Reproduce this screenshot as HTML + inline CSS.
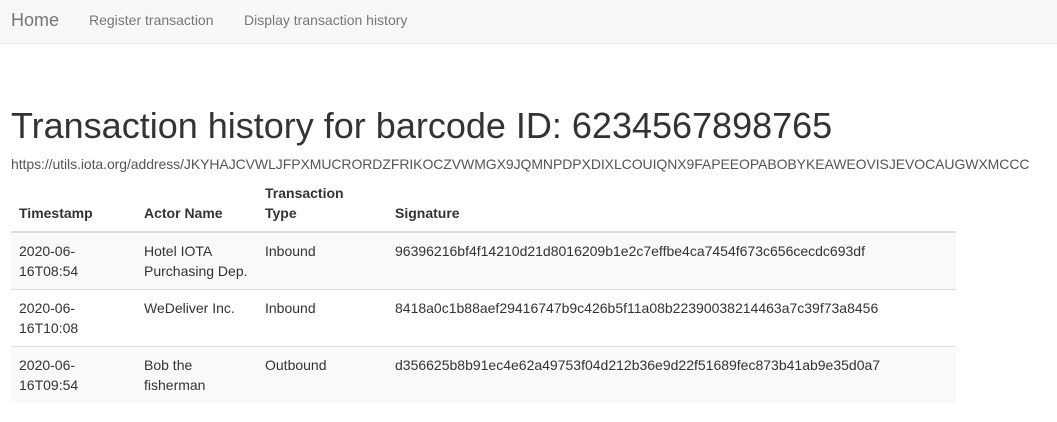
<!DOCTYPE html>
<html><head><style>
body{margin:0;font-family:"Liberation Sans",Arial,sans-serif;color:#333;background:#fff;width:1057px;height:422px;overflow:hidden}
.nav{height:43px;background:#f8f8f8;border-bottom:1px solid #e7e7e7;position:relative}
.nav a{position:absolute;color:#777;text-decoration:none;font-size:14px;top:12px}
.nav a.brand{font-size:18px;top:10px;left:11px}
h1{font-weight:500;font-size:36px;margin:0;position:absolute;left:11px;top:105px;color:#333}
.url{position:absolute;left:11px;top:156px;font-size:14px;letter-spacing:-0.07px;color:#555}
table{position:absolute;left:11px;top:180px;width:945px;border-collapse:collapse;font-size:14px;line-height:19.5px}
th{text-align:left;font-weight:bold;padding:4px 8px 8px;vertical-align:bottom;border-bottom:2px solid #ddd}
td{padding:9px 8px 8px;vertical-align:top;border-top:1px solid #ddd;height:38px}
tr.s td{background:#f9f9f9}
</style></head><body>
<div class="nav"><a class="brand" href="#">Home</a><a href="#" style="left:89px">Register transaction</a><a href="#" style="left:244px">Display transaction history</a></div>
<h1>Transaction history for barcode ID: 6234567898765</h1>
<div class="url">https://utils.iota.org/address/JKYHAJCVWLJFPXMUCRORDZFRIKOCZVWMGX9JQMNPDPXDIXLCOUIQNX9FAPEEOPABOBYKEAWEOVISJEVOCAUGWXMCCC</div>
<table>
<tr><th style="width:109px">Timestamp</th><th style="width:105px">Actor Name</th><th style="width:114px">Transaction<br>Type</th><th>Signature</th></tr>
<tr class="s"><td>2020-06-<br>16T08:54</td><td>Hotel IOTA<br>Purchasing Dep.</td><td>Inbound</td><td>96396216bf4f14210d21d8016209b1e2c7effbe4ca7454f673c656cecdc693df</td></tr>
<tr><td>2020-06-<br>16T10:08</td><td>WeDeliver Inc.</td><td>Inbound</td><td>8418a0c1b88aef29416747b9c426b5f11a08b22390038214463a7c39f73a8456</td></tr>
<tr class="s"><td>2020-06-<br>16T09:54</td><td>Bob the<br>fisherman</td><td>Outbound</td><td>d356625b8b91ec4e62a49753f04d212b36e9d22f51689fec873b41ab9e35d0a7</td></tr>
</table>
</body></html>
